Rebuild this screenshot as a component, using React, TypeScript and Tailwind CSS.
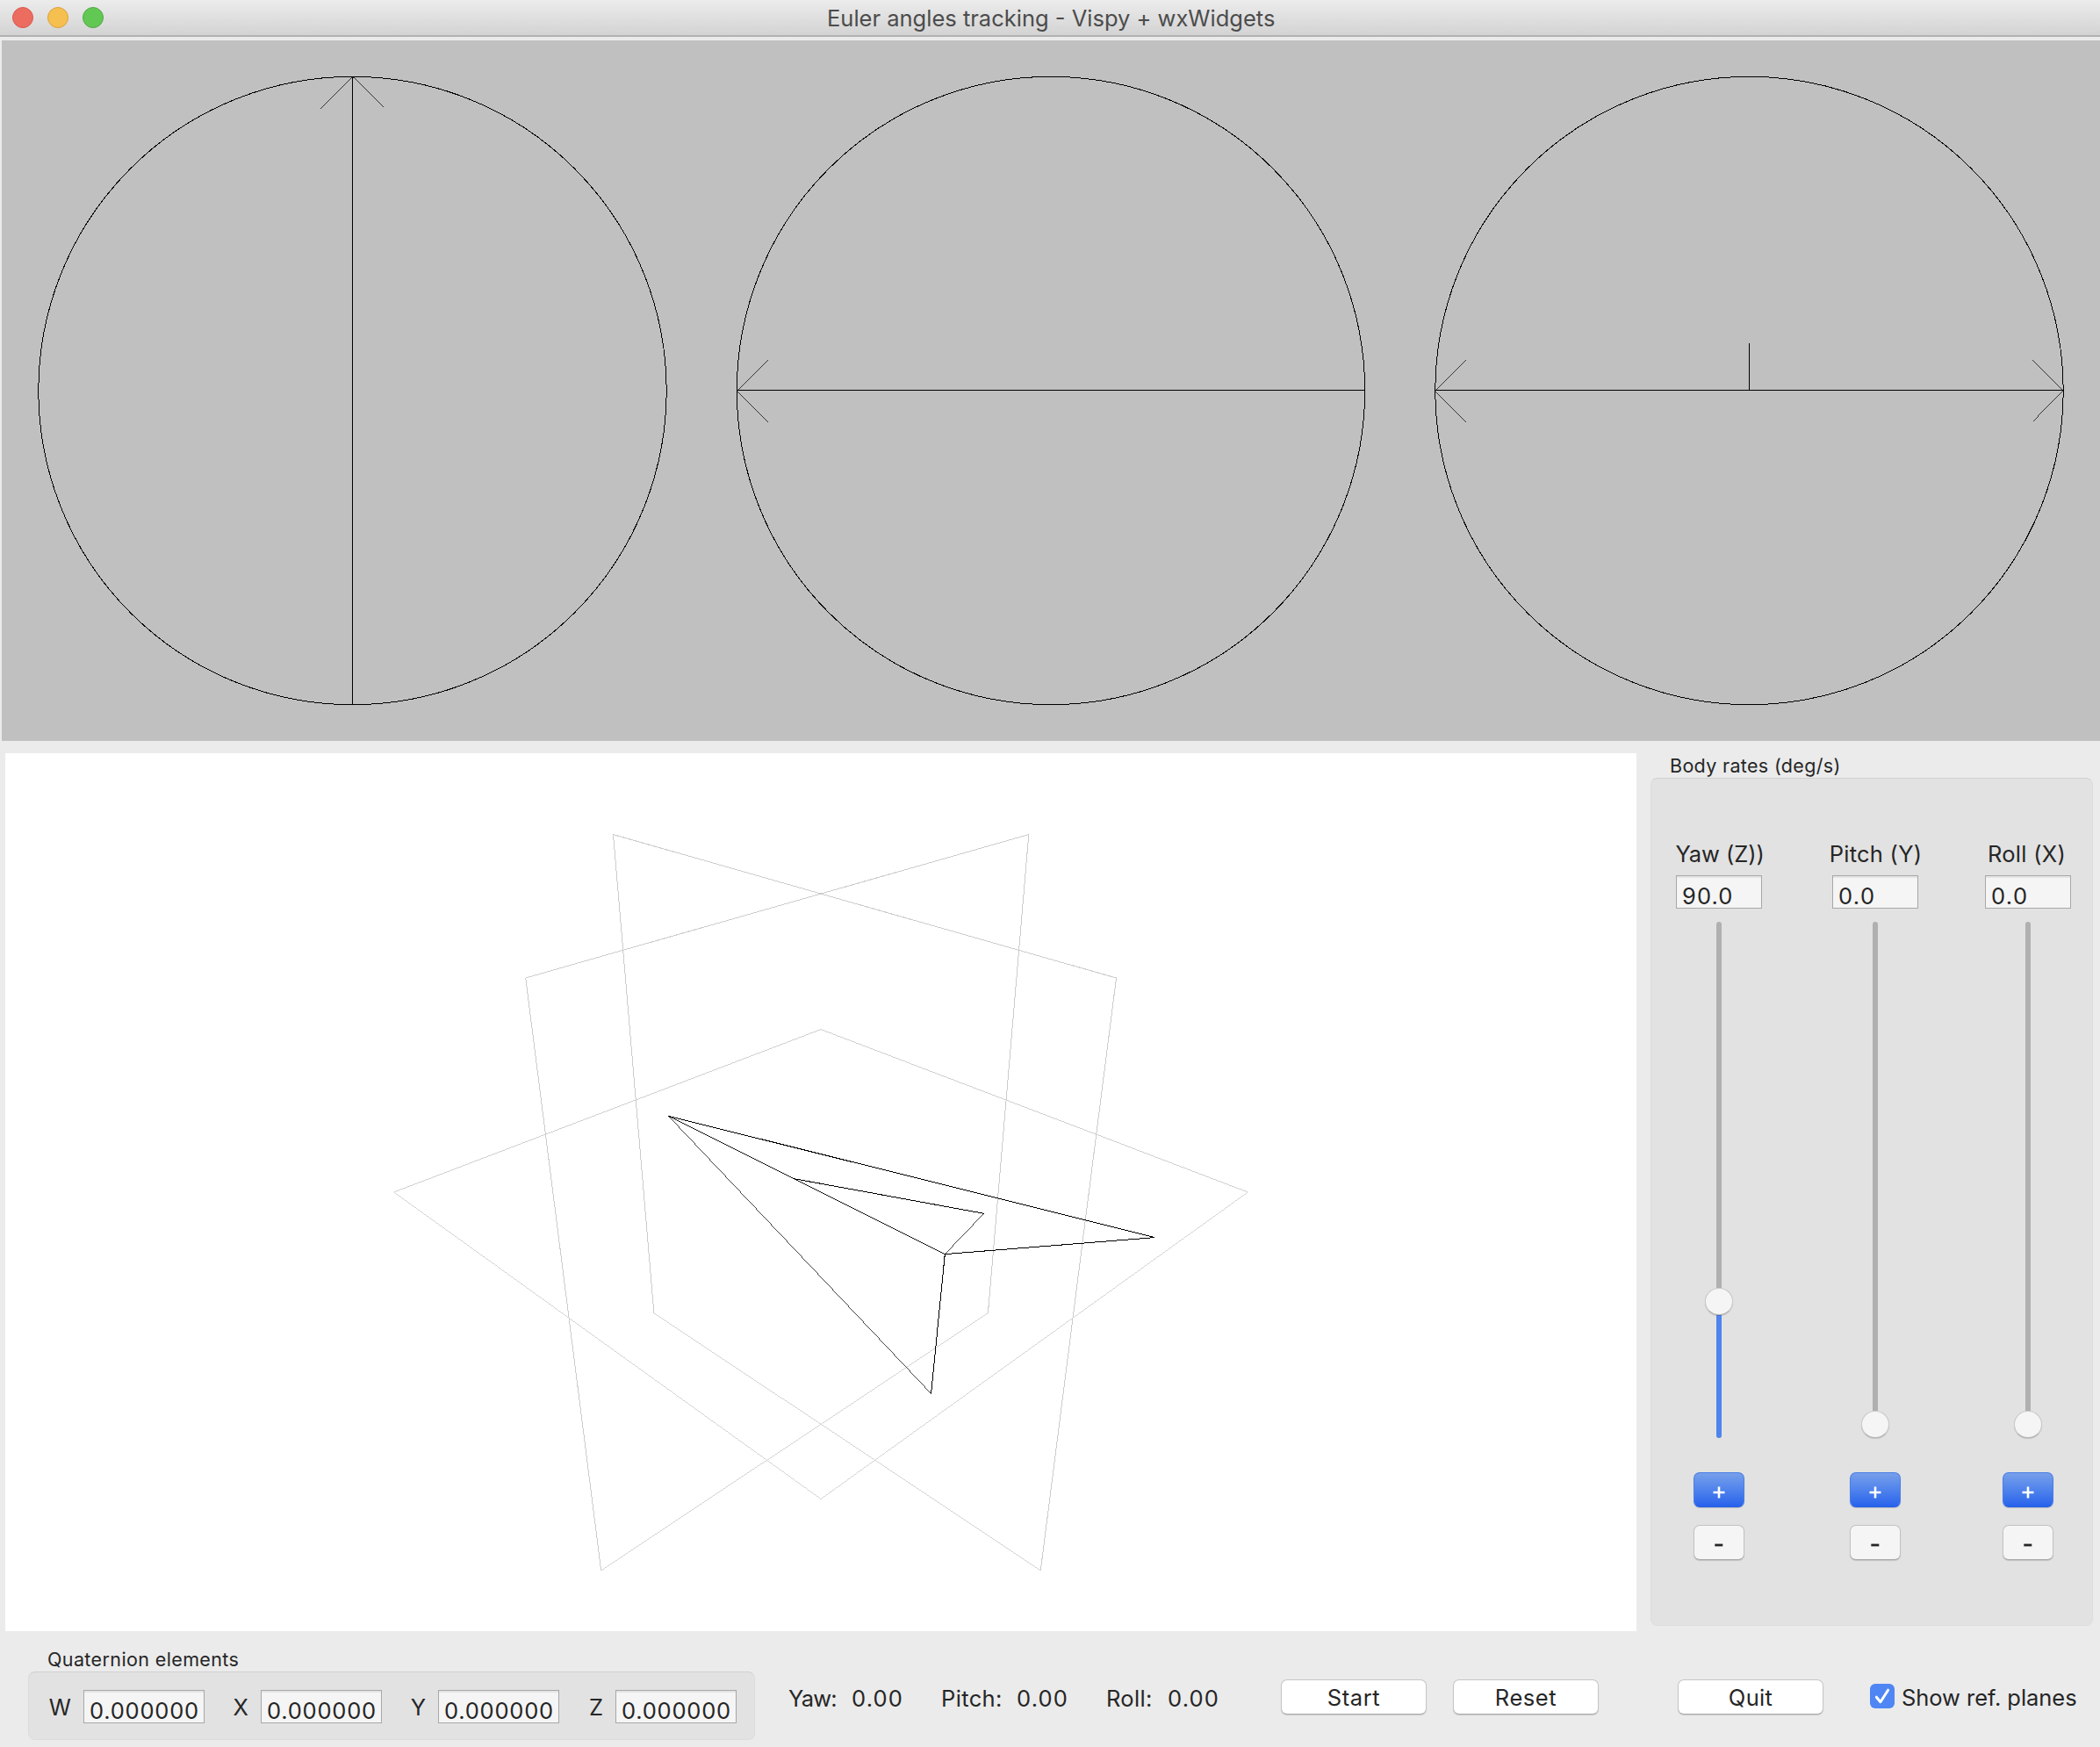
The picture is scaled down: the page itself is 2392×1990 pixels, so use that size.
import type { ReactNode } from "react";

function Field({ value, className }: { value: string; className: string }) {
  return (
    <div
      className={
        "h-[38px] shrink-0 border border-[#a8a8a8] bg-[#f5f5f5] pt-2 pl-[6px] leading-[30px] shadow-[inset_0_2px_1px_#e4e4e4] " +
        className
      }
    >
      {value}
    </div>
  );
}

function SmallButton({ label, primary }: { label: string; primary?: boolean }) {
  return (
    <button
      className={
        "flex h-10 w-[58px] items-center justify-center rounded-[7px] border " +
        (primary
          ? "border-[#4a7fe6] border-b-[#2560e0] bg-linear-to-b from-[#779fea] to-[#2862ec] text-white shadow-[0_1px_1px_rgba(0,0,0,0.15)]"
          : "border-[#c2c2c2] border-b-[#a9a9a9] bg-[#f5f5f5] shadow-[0_1px_1px_rgba(0,0,0,0.15)]")
      }
    >
      <svg width="14" height="14" viewBox="0 0 14 14" className="mt-[6px]" aria-label={label}>
        {primary ? (
          <path d="M7 0.5v13M0.5 7h13" stroke="currentColor" strokeWidth="2.6" />
        ) : (
          <path d="M2.3 7h9" stroke="currentColor" strokeWidth="2.8" />
        )}
      </svg>
    </button>
  );
}

type RateProps = {
  label: string;
  value: string;
  active?: boolean;
  className?: string;
  labelClass: string;
  fieldClass: string;
};

function RateColumn({ label, value, active, className = "", labelClass, fieldClass }: RateProps) {
  return (
    <div className={"flex w-[98px] flex-col items-center " + className}>
      <div className={"h-8 leading-8 whitespace-nowrap " + labelClass}>{label}</div>
      <Field value={value} className={"mt-2 w-[98px] " + fieldClass} />
      <div className="relative mt-[15px] h-[588px] w-8">
        <div className={"mx-auto w-[6px] rounded-full bg-[#b0b0b0] " + (active ? "h-[588px]" : "h-[573px]")} />
        {active && <div className="absolute bottom-0 left-[13px] h-[155px] w-[6px] rounded-b-full bg-[#4f84ee]" />}
        <div
          className={
            "absolute left-0 h-[31px] w-8 rounded-full border border-[#cacaca] border-b-[#b4b4b4] bg-[#f5f5f5] shadow-[0_1px_1px_rgba(0,0,0,0.15)] " +
            (active ? "top-[417px]" : "top-[557px]")
          }
        />
      </div>
      <div className="mt-[39px] flex flex-col gap-5">
        <SmallButton label="+" primary />
        <SmallButton label="-" />
      </div>
    </div>
  );
}

function PushButton({ children, className }: { children: ReactNode; className: string }) {
  return (
    <button
      className={
        "mt-[55px] flex h-10 shrink-0 items-center justify-center rounded-[7px] border border-[#c6c6c6] border-b-[#acacac] bg-white pt-[2px] leading-8 shadow-[0_1px_1px_rgba(0,0,0,0.15)] " +
        className
      }
    >
      {children}
    </button>
  );
}

function Quaternion({ name }: { name: string }) {
  return (
    <div className="flex w-[202px] shrink-0 justify-end">
      <div className="mt-1 mr-[14px] leading-8">{name}</div>
      <Field value="0.000000" className="w-[138px] tracking-[0.78px]" />
    </div>
  );
}

function Gauges() {
  return (
    <svg
      width="2390"
      height="798"
      viewBox="2 46 2390 798"
      className="mt-1 ml-[2px] block shrink-0 bg-[#c0c0c0]"
      fill="none"
      stroke="#000"
      strokeWidth="1"
      shapeRendering="crispEdges"
    >
      <circle cx="401.5" cy="445" r="357.7" />
      <circle cx="1197" cy="445" r="357.7" />
      <circle cx="1992.5" cy="445" r="357.7" />
      <path d="M401.5 88V802M839.5 444.5H1554.5M1634.5 444.5H2350M1992.5 391V444" />
      {/* Diagonals need a thinner stroke to stay one pixel wide */}
      <g strokeWidth="0.72">
        <path d="M401.5 88L365.3 124M401.5 88L437.3 123.5" />
        <path d="M839.5 444.5L875 409.3M839.5 445L875 480.7" />
        <path d="M1634.5 444.5L1670 409.3M1634.5 445L1670 480.7" />
        <path d="M2350 444.5L2314.6 409.3M2350 445L2315.6 480" />
      </g>
    </svg>
  );
}

function Scene() {
  return (
    <svg
      width="1858"
      height="1000"
      viewBox="6 858 1858 1000"
      className="ml-[6px] block shrink-0 bg-white"
      fill="none"
      strokeWidth="1"
      shapeRendering="crispEdges"
    >
      <g stroke="#cccccc">
        <path d="M448.6 1358L935 1172.6L1421.4 1358" strokeWidth="0.94" />
        <path d="M1421.4 1358L935 1707.5L448.6 1358" strokeWidth="0.82" />
        <path d="M744.9 1495.7L698.5 950.6L1271.5 1114L1185.3 1789" />
        <path d="M1125.4 1495.7L1171.8 950.6L598.7 1114L684.7 1789" />
        <path d="M1185.3 1789L744.9 1495.7M684.7 1789L1125.4 1495.7" strokeWidth="0.84" />
      </g>
      <g stroke="#000">
        <path d="M761.5 1271.3L1315.3 1409.6L1076.3 1428.6L1060.6 1587.5M903.4 1342.5L1120.7 1382.3" />
        <path d="M761.5 1271.3L1076.3 1428.6" strokeWidth="0.9" />
        <path d="M1060.6 1587.5L761.5 1271.3M1076.3 1428.6L1120.7 1382.3" strokeWidth="0.73" />
      </g>
    </svg>
  );
}

export default function App() {
  return (
    <div className="flex h-[1990px] w-[2392px] flex-col overflow-hidden bg-[#ebebeb] font-['Inter',sans-serif] text-[25.5px] text-[#262626]">
      <header className="flex h-[42px] shrink-0 border-b-2 border-b-[#b1b1b1] bg-linear-to-b from-[#ececec] to-[#d3d3d3]">
        <div className="flex gap-4 pt-2 pl-[14px]">
          <div className="size-6 rounded-full border border-[#d9584e] bg-[#ec6c60]" />
          <div className="size-6 rounded-full border border-[#dba03c] bg-[#f5c04f]" />
          <div className="size-6 rounded-full border border-[#50a845] bg-[#62c854]" />
        </div>
        <h1 className="mt-[5px] ml-[824px] leading-8 whitespace-nowrap text-[#4c4c4c]">
          Euler angles tracking - Vispy + wxWidgets
        </h1>
      </header>

      <Gauges />

      <main className="mt-[14px] flex shrink-0">
        <Scene />
        <aside className="ml-4">
          <div className="mt-px ml-[22px] h-[27px] text-[21.5px] leading-[26px] tracking-[0.33px]">Body rates (deg/s)</div>
          <div className="flex h-[966px] w-[504px] rounded-lg border border-[#dcdcdc] border-t-[#d0d0d0] bg-[#e2e2e2] pt-[70px] pl-7">
            <RateColumn
              label="Yaw (Z))"
              value="90.0"
              active
              labelClass="ml-[2px] tracking-[-0.07px]"
              fieldClass="tracking-[1.1px]"
            />
            <RateColumn
              label="Pitch (Y)"
              value="0.0"
              className="ml-20"
              labelClass="ml-px tracking-[0.25px]"
              fieldClass="tracking-[1.4px]"
            />
            <RateColumn
              label="Roll (X)"
              value="0.0"
              className="ml-[76px]"
              labelClass="mr-[3px] tracking-[0.28px]"
              fieldClass="tracking-[1.4px]"
            />
          </div>
        </aside>
      </main>

      <footer className="flex h-[132px] shrink-0 items-start">
        <section className="ml-8 w-[828px] pt-[19px]">
          <div className="ml-[22px] h-[27px] text-[21.5px] leading-[26px] tracking-[0.38px]">Quaternion elements</div>
          <div className="flex h-[78px] justify-end rounded-lg border border-[#dcdcdc] border-t-[#d0d0d0] bg-[#e2e2e2] pt-5 pr-5">
            <Quaternion name="W" />
            <Quaternion name="X" />
            <Quaternion name="Y" />
            <Quaternion name="Z" />
          </div>
        </section>

        <div className="mt-[61px] ml-[38px] flex leading-8 whitespace-nowrap">
          <span className="w-[72px] tracking-[-0.8px]">Yaw:</span>
          <span className="w-[102px] tracking-[1.2px]">0.00</span>
          <span className="w-[86px] tracking-[0.36px]">Pitch:</span>
          <span className="w-[102px] tracking-[1.2px]">0.00</span>
          <span className="w-[70px] tracking-[0.33px]">Roll:</span>
          <span className="w-[129px] tracking-[1.2px]">0.00</span>
        </div>

        <PushButton className="w-[166px] tracking-[0.56px]">Start</PushButton>
        <PushButton className="ml-[30px] w-[166px] tracking-[0.57px]">Reset</PushButton>
        <PushButton className="ml-[90px] w-[166px] tracking-[0.32px]">Quit</PushButton>

        <label className="mt-[60px] ml-[53px] flex items-start whitespace-nowrap">
          <span className="flex size-7 items-center justify-center rounded-md bg-[#4f86f4]">
            <svg width="28" height="28" viewBox="0 0 28 28" fill="none" stroke="#fff" strokeWidth="3">
              <path d="M7.4 15.2L11.9 20.7L20.6 7.2" strokeLinecap="round" strokeLinejoin="round" />
            </svg>
          </span>
          <span className="ml-2 leading-8 tracking-[-0.05px]">Show ref. planes</span>
        </label>
      </footer>
    </div>
  );
}
